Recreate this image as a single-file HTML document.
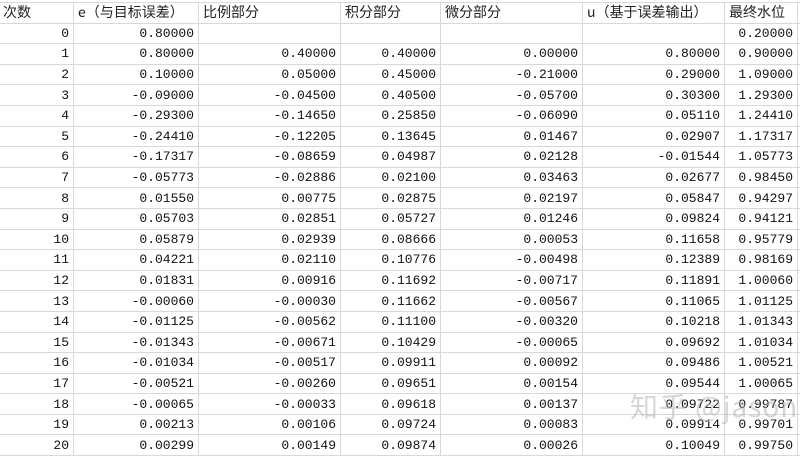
<!DOCTYPE html>
<html><head><meta charset="utf-8"><style>
html,body{margin:0;padding:0;background:#fff;width:800px;height:456px;overflow:hidden;position:relative}
table{position:absolute;left:-2px;top:2px;width:812px;border-collapse:collapse;table-layout:fixed;font-family:"Liberation Mono","Noto Serif CJK SC",monospace;font-size:13px;color:#111}
td{border:1px solid #d8d8d8;height:19.6px;padding:0 4px;white-space:nowrap;overflow:hidden;text-align:right;line-height:19px}
tr.h td{text-align:left;font-family:"Noto Sans CJK SC","Liberation Sans",sans-serif;font-size:14px;color:#222}
.wm{position:absolute;left:630px;top:386px;font-family:"Noto Sans CJK SC","Liberation Sans",sans-serif;font-size:28px;color:rgba(180,180,180,0.55);letter-spacing:1px}
</style></head><body>
<table>
<colgroup><col style="width:75px"><col style="width:125px"><col style="width:142px"><col style="width:100px"><col style="width:142px"><col style="width:142px"><col style="width:73px"><col style="width:13px"></colgroup>
<tr class="h"><td>次数</td><td>e（与目标误差）</td><td>比例部分</td><td>积分部分</td><td>微分部分</td><td>u（基于误差输出）</td><td>最终水位</td><td></td></tr>
<tr><td>0</td><td>0.80000</td><td></td><td></td><td></td><td></td><td>0.20000</td><td></td></tr>
<tr><td>1</td><td>0.80000</td><td>0.40000</td><td>0.40000</td><td>0.00000</td><td>0.80000</td><td>0.90000</td><td></td></tr>
<tr><td>2</td><td>0.10000</td><td>0.05000</td><td>0.45000</td><td>-0.21000</td><td>0.29000</td><td>1.09000</td><td></td></tr>
<tr><td>3</td><td>-0.09000</td><td>-0.04500</td><td>0.40500</td><td>-0.05700</td><td>0.30300</td><td>1.29300</td><td></td></tr>
<tr><td>4</td><td>-0.29300</td><td>-0.14650</td><td>0.25850</td><td>-0.06090</td><td>0.05110</td><td>1.24410</td><td></td></tr>
<tr><td>5</td><td>-0.24410</td><td>-0.12205</td><td>0.13645</td><td>0.01467</td><td>0.02907</td><td>1.17317</td><td></td></tr>
<tr><td>6</td><td>-0.17317</td><td>-0.08659</td><td>0.04987</td><td>0.02128</td><td>-0.01544</td><td>1.05773</td><td></td></tr>
<tr><td>7</td><td>-0.05773</td><td>-0.02886</td><td>0.02100</td><td>0.03463</td><td>0.02677</td><td>0.98450</td><td></td></tr>
<tr><td>8</td><td>0.01550</td><td>0.00775</td><td>0.02875</td><td>0.02197</td><td>0.05847</td><td>0.94297</td><td></td></tr>
<tr><td>9</td><td>0.05703</td><td>0.02851</td><td>0.05727</td><td>0.01246</td><td>0.09824</td><td>0.94121</td><td></td></tr>
<tr><td>10</td><td>0.05879</td><td>0.02939</td><td>0.08666</td><td>0.00053</td><td>0.11658</td><td>0.95779</td><td></td></tr>
<tr><td>11</td><td>0.04221</td><td>0.02110</td><td>0.10776</td><td>-0.00498</td><td>0.12389</td><td>0.98169</td><td></td></tr>
<tr><td>12</td><td>0.01831</td><td>0.00916</td><td>0.11692</td><td>-0.00717</td><td>0.11891</td><td>1.00060</td><td></td></tr>
<tr><td>13</td><td>-0.00060</td><td>-0.00030</td><td>0.11662</td><td>-0.00567</td><td>0.11065</td><td>1.01125</td><td></td></tr>
<tr><td>14</td><td>-0.01125</td><td>-0.00562</td><td>0.11100</td><td>-0.00320</td><td>0.10218</td><td>1.01343</td><td></td></tr>
<tr><td>15</td><td>-0.01343</td><td>-0.00671</td><td>0.10429</td><td>-0.00065</td><td>0.09692</td><td>1.01034</td><td></td></tr>
<tr><td>16</td><td>-0.01034</td><td>-0.00517</td><td>0.09911</td><td>0.00092</td><td>0.09486</td><td>1.00521</td><td></td></tr>
<tr><td>17</td><td>-0.00521</td><td>-0.00260</td><td>0.09651</td><td>0.00154</td><td>0.09544</td><td>1.00065</td><td></td></tr>
<tr><td>18</td><td>-0.00065</td><td>-0.00033</td><td>0.09618</td><td>0.00137</td><td>0.09722</td><td>0.99787</td><td></td></tr>
<tr><td>19</td><td>0.00213</td><td>0.00106</td><td>0.09724</td><td>0.00083</td><td>0.09914</td><td>0.99701</td><td></td></tr>
<tr><td>20</td><td>0.00299</td><td>0.00149</td><td>0.09874</td><td>0.00026</td><td>0.10049</td><td>0.99750</td><td></td></tr>
</table>
<div class="wm">知乎 @jason</div>
</body></html>
